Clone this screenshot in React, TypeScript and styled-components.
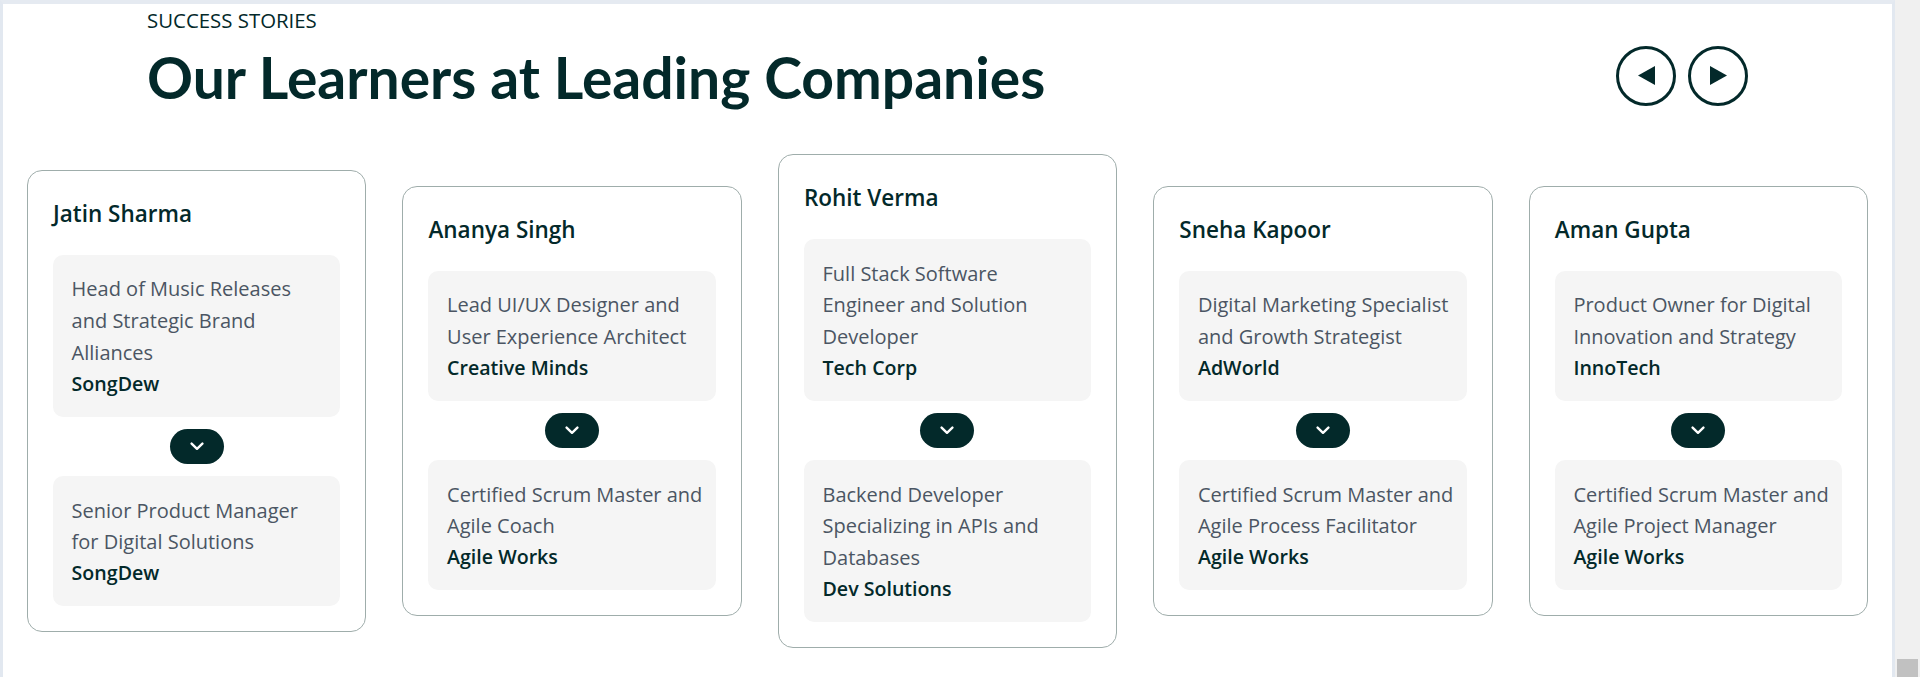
import React from "react";
import styled, { createGlobalStyle } from "styled-components";

const GlobalStyle = createGlobalStyle`
  html, body {
    margin: 0;
    padding: 0;
    background: #ffffff;
    overflow: hidden;
  }
  body {
    font-family: "Open Sans", "Noto Sans", sans-serif;
    color: #03292a;
  }
  * { box-sizing: border-box; }
`;

const Page = styled.div`
  display: flex;
  width: 1920px;
  height: 677px;
`;

const Frame = styled.main`
  flex: 1;
  min-width: 0;
  display: flex;
  flex-direction: column;
  background: #ffffff;
  border-left: 3px solid #e2e8f0;
  border-top: 4px solid #e5eaf1;
  border-right: 3px solid #e2e8f0;
`;

const ScrollTrack = styled.div`
  width: 25px;
  background: #f0f0f0;
  display: flex;
  flex-direction: column;
  justify-content: flex-end;
  padding: 0 2px;
`;

const ScrollThumb = styled.div`
  height: 18px;
  background: #c1c1c1;
`;

const Header = styled.header`
  display: flex;
  justify-content: space-between;
  align-items: flex-end;
  padding: 3.5px 144px 0;
`;

const TitleBlock = styled.div`
  display: flex;
  flex-direction: column;
`;

const Eyebrow = styled.span`
  font-size: 20.4px;
  line-height: 25px;
  font-weight: 400;
  color: #03292a;
  letter-spacing: 0;
  margin-bottom: 14.5px;
`;

const Heading = styled.h1`
  margin: 0;
  font-family: "Lato", "Open Sans", sans-serif;
  font-size: 57px;
  line-height: 60px;
  font-weight: 700;
  color: #03292a;
  white-space: nowrap;
`;

const NavGroup = styled.div`
  display: flex;
  gap: 12px;
  margin-bottom: 1.5px;
`;

const NavButton = styled.button`
  width: 60px;
  height: 60px;
  border-radius: 50%;
  border: 3px solid #03292a;
  background: #ffffff;
  color: #03292a;
  display: flex;
  align-items: center;
  justify-content: center;
  padding: 0;
  cursor: pointer;
`;

const CardsRow = styled.section`
  display: flex;
  align-items: center;
  gap: 36.3px;
  padding: 0 24px;
  margin-top: 47px;
`;

const Card = styled.article`
  flex: 1 1 0;
  min-width: 0;
  display: flex;
  flex-direction: column;
  border: 1px solid #9fadab;
  border-radius: 15px;
  padding: 25px;
  background: #ffffff;
`;

const Name = styled.h3`
  margin: 0 0 24px;
  font-size: 22.5px;
  line-height: 35px;
  font-weight: 600;
  color: #03292a;
  white-space: nowrap;
`;

const RoleBox = styled.div`
  background: #f5f5f5;
  border-radius: 10px;
  padding: 18.6px;
  display: flex;
  flex-direction: column;
`;

const RoleLine = styled.span`
  font-size: 20px;
  line-height: 31.7px;
  font-weight: 400;
  color: #4b5563;
  white-space: nowrap;
`;

const Company = styled.span`
  font-size: 19.6px;
  line-height: 29.5px;
  font-weight: 600;
  color: #03292a;
  white-space: nowrap;
`;

const ToggleButton = styled.button`
  align-self: center;
  width: 54px;
  height: 35px;
  margin: 12.2px 0;
  border: none;
  border-radius: 999px;
  background: #03292a;
  display: flex;
  align-items: center;
  justify-content: center;
  padding: 0;
  cursor: pointer;
`;

type Role = { lines: string[]; company: string };
type Learner = { name: string; current: Role; previous: Role };

const learners: Learner[] = [
  {
    name: "Jatin Sharma",
    current: { lines: ["Head of Music Releases", "and Strategic Brand", "Alliances"], company: "SongDew" },
    previous: { lines: ["Senior Product Manager", "for Digital Solutions"], company: "SongDew" },
  },
  {
    name: "Ananya Singh",
    current: { lines: ["Lead UI/UX Designer and", "User Experience Architect"], company: "Creative Minds" },
    previous: { lines: ["Certified Scrum Master and", "Agile Coach"], company: "Agile Works" },
  },
  {
    name: "Rohit Verma",
    current: { lines: ["Full Stack Software", "Engineer and Solution", "Developer"], company: "Tech Corp" },
    previous: { lines: ["Backend Developer", "Specializing in APIs and", "Databases"], company: "Dev Solutions" },
  },
  {
    name: "Sneha Kapoor",
    current: { lines: ["Digital Marketing Specialist", "and Growth Strategist"], company: "AdWorld" },
    previous: { lines: ["Certified Scrum Master and", "Agile Process Facilitator"], company: "Agile Works" },
  },
  {
    name: "Aman Gupta",
    current: { lines: ["Product Owner for Digital", "Innovation and Strategy"], company: "InnoTech" },
    previous: { lines: ["Certified Scrum Master and", "Agile Project Manager"], company: "Agile Works" },
  },
];

const TriangleLeft = () => (
  <svg width="17" height="19" viewBox="0 0 17 19" aria-hidden="true">
    <polygon points="0,9.5 17,0 17,19" fill="#03292a" />
  </svg>
);

const TriangleRight = () => (
  <svg width="17" height="19" viewBox="0 0 17 19" aria-hidden="true">
    <polygon points="17,9.5 0,0 0,19" fill="#03292a" />
  </svg>
);

const Chevron = () => (
  <svg width="14" height="9" viewBox="0 0 14 9" aria-hidden="true">
    <polyline points="1.6,1.6 7,6.8 12.4,1.6" fill="none" stroke="#ffffff" strokeWidth="2.4" strokeLinecap="round" strokeLinejoin="round" />
  </svg>
);

const RoleCard = ({ role }: { role: Role }) => (
  <RoleBox>
    {role.lines.map((l) => (
      <RoleLine key={l}>{l}</RoleLine>
    ))}
    <Company>{role.company}</Company>
  </RoleBox>
);

export default function App() {
  return (
    <Page>
      <GlobalStyle />
      <Frame>
        <Header>
          <TitleBlock>
            <Eyebrow>SUCCESS STORIES</Eyebrow>
            <Heading>Our Learners at Leading Companies</Heading>
          </TitleBlock>
          <NavGroup>
            <NavButton aria-label="Previous">
              <TriangleLeft />
            </NavButton>
            <NavButton aria-label="Next">
              <TriangleRight />
            </NavButton>
          </NavGroup>
        </Header>
        <CardsRow>
          {learners.map((p) => (
            <Card key={p.name}>
              <Name>{p.name}</Name>
              <RoleCard role={p.current} />
              <ToggleButton aria-label="Show previous role">
                <Chevron />
              </ToggleButton>
              <RoleCard role={p.previous} />
            </Card>
          ))}
        </CardsRow>
      </Frame>
      <ScrollTrack>
        <ScrollThumb />
      </ScrollTrack>
    </Page>
  );
}
